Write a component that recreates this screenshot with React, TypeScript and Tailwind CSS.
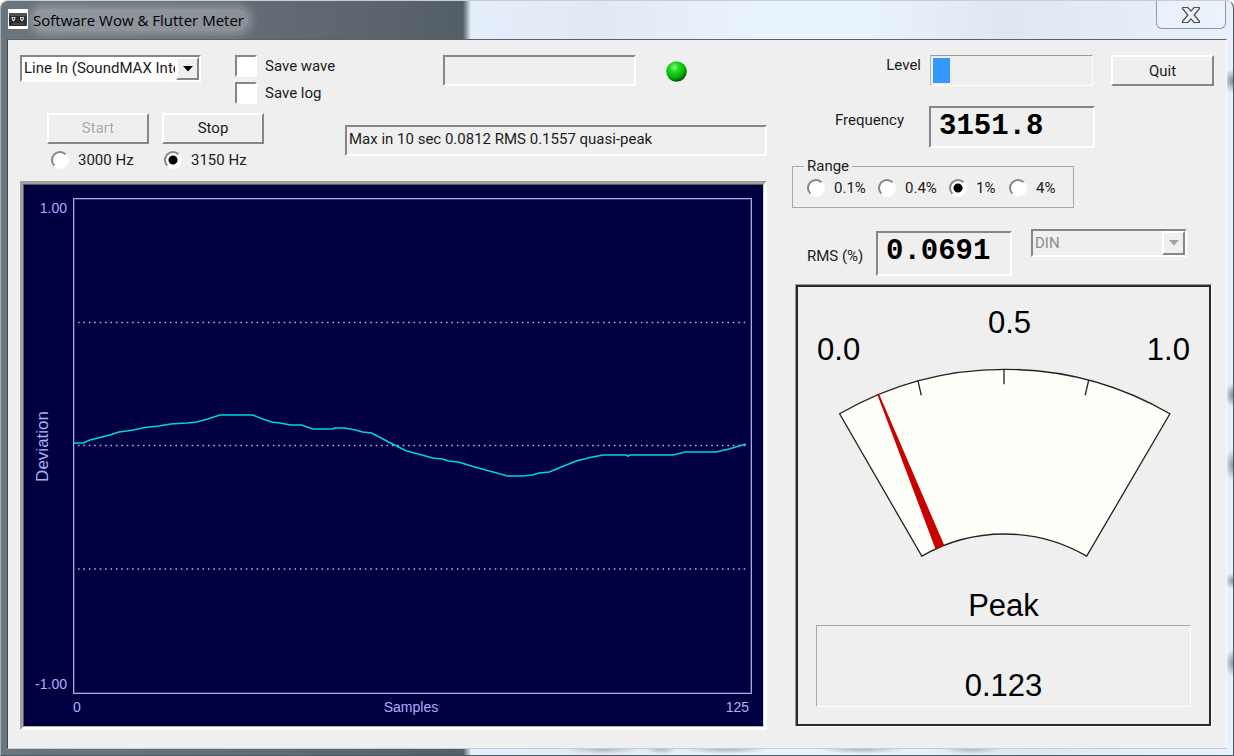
import React, { useState } from 'react';
import clsx from 'clsx';

type Range = '0.1%' | '0.4%' | '1%' | '4%';

const RANGES: { value: Range; className: string }[] = [
  { value: '0.1%', className: 'w-[71px]' },
  { value: '0.4%', className: 'w-[71px]' },
  { value: '1%', className: 'w-[60px]' },
  { value: '4%', className: '' },
];

// Deviation trace in plot coordinates (680 x 496, zero line at 248)
const TRACE = [
  [0, 245], [10, 245], [17, 242], [25, 240], [37, 237], [46, 234], [54, 233], [60, 232], [70, 230],
  [76, 229], [86, 228], [98, 226], [114, 225], [124, 224], [135, 221], [147, 217], [180, 217],
  [190, 221], [199, 224], [207, 225], [218, 227], [229, 227], [240, 231], [260, 231], [262, 230],
  [272, 230], [283, 232], [290, 234], [299, 235], [320, 246], [334, 253], [346, 256], [360, 260],
  [370, 261], [376, 263], [386, 264], [399, 268], [435, 278], [450, 278], [460, 277], [467, 275],
  [477, 274], [489, 269], [504, 263], [520, 259], [531, 257], [554, 257], [556, 258], [558, 257],
  [601, 257], [613, 254], [644, 254], [657, 251], [674, 246],
];

const SUNKEN = 'border-2 border-t-[#868686] border-l-[#868686] border-r-white border-b-white';
const RAISED = 'border-2 border-t-white border-l-white border-r-[#868686] border-b-[#868686]';

const Radio: React.FC<{
  name: string;
  label: string;
  checked: boolean;
  onChange: () => void;
  className?: string;
}> = ({ name, label, checked, onChange, className }) => (
  <label className={clsx('flex items-center gap-[9px]', className)}>
    <input
      type="radio"
      name={name}
      checked={checked}
      onChange={onChange}
      className="size-[18px] shrink-0 appearance-none rounded-full border-2 border-t-[#868686] border-l-[#868686] border-r-white border-b-white bg-white checked:bg-[radial-gradient(circle,#000_4px,#fff_5px)]"
    />
    {label}
  </label>
);

const Check: React.FC<{ label: string }> = ({ label }) => (
  <label className="flex h-[22px] items-center gap-2">
    <input
      type="checkbox"
      className={clsx('size-[22px] appearance-none bg-white checked:bg-[radial-gradient(circle,#000_5px,#fff_6px)]', SUNKEN)}
    />
    {label}
  </label>
);

const Dropdown: React.FC<{ label: string; options: string[]; disabled?: boolean; className?: string }> = ({
  label,
  options,
  disabled,
  className,
}) => (
  <div className={clsx('relative', SUNKEN, disabled ? 'bg-[#efefef]' : 'bg-white', className)}>
    <select
      aria-label={label}
      disabled={disabled}
      className="block h-full w-full appearance-none truncate pr-6 pl-[2px] text-clip outline-none disabled:text-[#8c8c8c] disabled:opacity-100"
    >
      {options.map(o => (
        <option key={o}>{o}</option>
      ))}
    </select>
    <span
      className={clsx(
        'pointer-events-none absolute inset-y-0 right-0 flex w-[23px] items-center justify-center bg-[#efefef]',
        RAISED
      )}
    >
      <svg width="10" height="6" viewBox="0 0 10 6">
        <path d="M0 0H10L5 5.5Z" fill={disabled ? '#a0a0a0' : '#000'} />
      </svg>
    </span>
  </div>
);

const PushButton: React.FC<React.ButtonHTMLAttributes<HTMLButtonElement>> = ({ className, ...props }) => (
  <button
    type="button"
    className={clsx(
      'h-[31px] bg-[#efefef] disabled:text-[#a8a8a8] disabled:[text-shadow:1px_1px_0_#fff]',
      RAISED,
      className
    )}
    {...props}
  />
);

const TitleBar: React.FC = () => (
  <header className="flex h-[38px] items-start pr-[7px] pl-[7px]">
    <svg className="mt-2" width="20" height="20" viewBox="0 0 20 20" aria-hidden="true">
      <rect width="20" height="20" fill="#fff" />
      <rect x="1" y="4" width="18" height="13" rx="1" fill="#2b2b2b" />
      <rect x="1" y="4" width="18" height="3" fill="#505050" />
      <rect x="4" y="14" width="12" height="2" fill="#444" />
      <path d="M3.500 8H7.500L7 11L5.500 12.500L4 11Z" fill="#e4e4e4" />
      <path d="M12 8H16L15.500 11L14 12.500L12.500 11Z" fill="#e4e4e4" />
      <circle cx="5.500" cy="9.700" r=".9" fill="#333" />
      <circle cx="14" cy="9.700" r=".9" fill="#333" />
    </svg>
    <h1 className="mt-2 ml-[5px] rounded-full bg-white/25 pr-1 font-['Open_Sans','Noto_Sans',sans-serif] text-[15px] leading-[22px] text-black shadow-[0_0_8px_4px_rgba(255,255,255,0.25)]">
      Software Wow &amp; Flutter Meter
    </h1>
    <button
      type="button"
      aria-label="Close"
      className="ml-auto flex h-7 w-[70px] items-center justify-center rounded-b-md border border-t-0 border-[#8f98a5] bg-white/20"
    >
      <svg width="20" height="18" viewBox="0 0 20 18">
        <path
          d="M1.500 1.500H6.800L10 5.200L13.200 1.500H18.500V2.500L13.200 9L18.500 15.500V16.500H13.200L10 12.800L6.800 16.500H1.500V15.500L6.800 9L1.500 2.500Z"
          fill="#f1f1f1"
          stroke="#4b5160"
          strokeWidth="1.200"
          strokeLinejoin="round"
        />
      </svg>
    </button>
  </header>
);

const DeviationChart: React.FC = () => (
  <section
    aria-label="Deviation"
    className="flex-1 border-[3px] border-t-[#a0a0a0] border-l-[#a0a0a0] border-r-white border-b-white"
  >
    <div className="grid h-full grid-cols-[49px_1fr] grid-rows-[1fr_32px] border border-t-[#5c5c5c] border-l-[#5c5c5c] border-r-[#d8d8d8] border-b-[#b0b0b0] bg-[#000040] pt-[13px] pr-[11px] font-['Liberation_Sans',Arial,sans-serif] text-sm leading-5 text-[#b0aef8]">
      <div className="flex flex-col items-end justify-between pr-[6px]">
        <span>1.00</span>
        <span className="mr-[14px] rotate-180 text-[17px] [writing-mode:vertical-rl]">Deviation</span>
        <span>-1.00</span>
      </div>
      <div className="border border-[#a9a6ec] shadow-[inset_0_0_0_1px_#33337a]">
        <svg className="block h-full w-full" viewBox="1 1 678 494" preserveAspectRatio="none">
          {[124.5, 247.5, 371].map(y => (
            <line key={y} x1="5" x2="675" y1={y} y2={y} stroke="#b4b2e6" strokeWidth="1.300" strokeDasharray="1.600 3.820" />
          ))}
          <polyline
            points={TRACE.map(p => p.join(',')).join(' ')}
            fill="none"
            stroke="#00d4e0"
            strokeWidth="1.600"
          />
        </svg>
      </div>
      <div className="col-start-2 grid grid-cols-3 pt-[3px] pr-[3px]">
        <span>0</span>
        <span className="text-center">Samples</span>
        <span className="text-right">125</span>
      </div>
    </div>
  </section>
);

const PeakMeter: React.FC = () => (
  <section
    aria-label="Peak meter"
    className="mr-[2px] mb-[3px] ml-[3px] flex flex-1 flex-col border border-t-[#9a9a9a] border-l-[#9a9a9a] border-r-white border-b-white font-['Liberation_Sans',Arial,sans-serif] text-[31px] leading-9 text-black"
  >
    <div className="flex flex-1 flex-col border-2 border-[#2a2a2a]">
      <svg className="block w-full" viewBox="0 0 410 300">
        <g fill="#000" fontSize="31">
          <text x="19" y="73">0.0</text>
          <text x="211" y="46" textAnchor="middle">0.5</text>
          <text x="391" y="73" textAnchor="end">1.0</text>
        </g>
        <path
          d="M41.500 126.500A328 328 0 0 1 371 126.500L288 268.500A164 164 0 0 0 123.500 268.500Z"
          fill="#fffffa"
          stroke="#222"
          strokeWidth="1.300"
        />
        <path d="M119.500 93L123 108M205.500 82V97M290 93L286.500 108" stroke="#222" strokeWidth="1.300" />
        <path d="M79 107L81 107L146 258L137 261Z" fill="#c80000" />
      </svg>
      <div className="text-center">Peak</div>
      <output className="mx-[18px] mt-auto mb-[17px] flex h-[82px] items-end justify-center border border-t-[#a8a8a8] border-l-[#a8a8a8] border-r-white border-b-white pb-[2px]">
        0.123
      </output>
    </div>
  </section>
);

const App: React.FC = () => {
  const [testTone, setTestTone] = useState<3000 | 3150>(3150);
  const [range, setRange] = useState<Range>('1%');
  const level = 17 / 160;

  return (
    <div className="flex min-h-screen flex-col rounded-t-lg border border-t-[#c9cdd2] border-l-[#aab0b6] border-r-[#4d5a66] border-b-[#4d5a66] bg-[radial-gradient(10px_12px_at_100%_80px,#7f8a96_0,transparent_100%),radial-gradient(8px_12px_at_100%_394px,#7f8a96_0,transparent_100%),radial-gradient(8px_16px_at_100%_464px,#8b96a2_0,transparent_100%),radial-gradient(8px_8px_at_100%_580px,#8b96a2_0,transparent_100%),radial-gradient(8px_14px_at_100%_662px,#8b96a2_0,transparent_100%),radial-gradient(36px_5px_at_602px_748px,#aab4be_0,transparent_100%),radial-gradient(16px_5px_at_660px_748px,#aab4be_0,transparent_100%),radial-gradient(44px_5px_at_725px_748px,#aab4be_0,transparent_100%),radial-gradient(44px_5px_at_860px_748px,#aab4be_0,transparent_100%),radial-gradient(30px_5px_at_970px_748px,#aab4be_0,transparent_100%),linear-gradient(90deg,#6b757d_0,#646d76_240px,#5d666f_360px,#545e67_462px,#e4eefa_470px,#e2e9f4_600px,#e9f3fe_760px,#e9f3fe_860px,#dfe7f2_1000px,#e8f0fb_1220px)] font-[Roboto,'Liberation_Sans',sans-serif] text-[15px] text-[#1c1c1c]">
      <TitleBar />

      <main className="mx-[6px] mb-[6px] flex flex-1 gap-[25px] border border-t-[#59636c] border-l-[#3d454c] border-r-[#f4f7fb] border-b-[#c8ced4] bg-[#efefef] pt-[15px] pr-3 pb-[18px] pl-3">
        <div className="flex min-w-0 flex-1 flex-col">
          <div className="flex items-start">
            <Dropdown
              label="Input device"
              options={['Line In (SoundMAX Integrated Digital Audio)']}
              className="h-[27px] w-[181px]"
            />
            <div className="ml-[34px] flex w-[208px] flex-col gap-[5px]">
              <Check label="Save wave" />
              <Check label="Save log" />
            </div>
            <output aria-label="Status" className={clsx('h-[31px] w-[193px]', SUNKEN)} />
            <svg className="mt-[6px] ml-[30px]" width="21" height="21" viewBox="0 0 21 21" aria-label="Running">
              <defs>
                <radialGradient id="led" cx=".4" cy=".3" r=".7">
                  <stop offset="0" stopColor="#8cf08c" />
                  <stop offset=".3" stopColor="#22dc22" />
                  <stop offset=".7" stopColor="#06b406" />
                  <stop offset="1" stopColor="#044a04" />
                </radialGradient>
              </defs>
              <circle cx="10.500" cy="10.500" r="10.300" fill="url(#led)" />
            </svg>
          </div>

          <div className="mt-[9px] flex h-[68px] items-start pl-[27px]">
            <div className="w-[115px]">
              <PushButton className="w-[102px]" disabled>Start</PushButton>
              <Radio
                name="tone"
                label="3000 Hz"
                checked={testTone === 3000}
                onChange={() => setTestTone(3000)}
                className="h-8 pl-1"
              />
            </div>
            <div className="w-[102px]">
              <PushButton className="w-full">Stop</PushButton>
              <Radio
                name="tone"
                label="3150 Hz"
                checked={testTone === 3150}
                onChange={() => setTestTone(3150)}
                className="h-8 pl-[2px]"
              />
            </div>
            <output className={clsx('mt-[12px] ml-[81px] h-[31px] flex-1 pl-[2px] leading-6', SUNKEN)}>
              Max in 10 sec 0.0812 RMS 0.1557 quasi-peak
            </output>
          </div>

          <DeviationChart />
        </div>

        <div className="flex w-[422px] flex-col leading-5">
          <div className="flex items-start">
            <span id="level" className="w-[129px] text-right">Level</span>
            <div
              role="progressbar"
              aria-labelledby="level"
              aria-valuenow={Math.round(level * 100)}
              className="ml-[9px] h-[31px] w-[163px] border border-t-[#9a9a9a] border-l-[#b4b4b4] border-r-white border-b-white p-[2px]"
            >
              <div className="h-full bg-[#3399ff]" style={{ width: `${level * 100}%` }} />
            </div>
            <PushButton className="ml-auto w-[103px]">Quit</PushButton>
          </div>

          <div className="mt-5 flex items-start">
            <label htmlFor="freq" className="mt-1 w-[112px] text-right">Frequency</label>
            <output
              id="freq"
              className={clsx("ml-[25px] h-[42px] w-[166px] pl-2 font-['Liberation_Mono','Courier_New',monospace] text-[29px] leading-[38px] font-bold text-black", SUNKEN)}
            >
              3151.8
            </output>
          </div>

          <fieldset className="mt-2 w-[282px] border border-[#a8a8a8] pb-[7px] pl-[14px]">
            <legend className="-ml-[3px] px-[3px]">Range</legend>
            <div className="flex h-6">
              {RANGES.map(r => (
                <Radio
                  key={r.value}
                  name="range"
                  label={r.value}
                  checked={range === r.value}
                  onChange={() => setRange(r.value)}
                  className={r.className}
                />
              ))}
            </div>
          </fieldset>

          <div className="mt-[21px] flex items-start pl-[15px]">
            <label htmlFor="rms" className="mt-[17px] w-[69px] whitespace-nowrap">RMS (%)</label>
            <output
              id="rms"
              className={clsx("mt-[2px] h-[45px] w-[136px] pl-2 font-['Liberation_Mono','Courier_New',monospace] text-[29px] leading-[38px] font-bold text-black", SUNKEN)}
            >
              0.0691
            </output>
            <Dropdown label="Weighting" options={['DIN']} disabled className="ml-[19px] h-[28px] w-[156px]" />
          </div>

          <div className="mt-2 flex flex-1 flex-col">
            <PeakMeter />
          </div>
        </div>
      </main>
    </div>
  );
};

export default App;
